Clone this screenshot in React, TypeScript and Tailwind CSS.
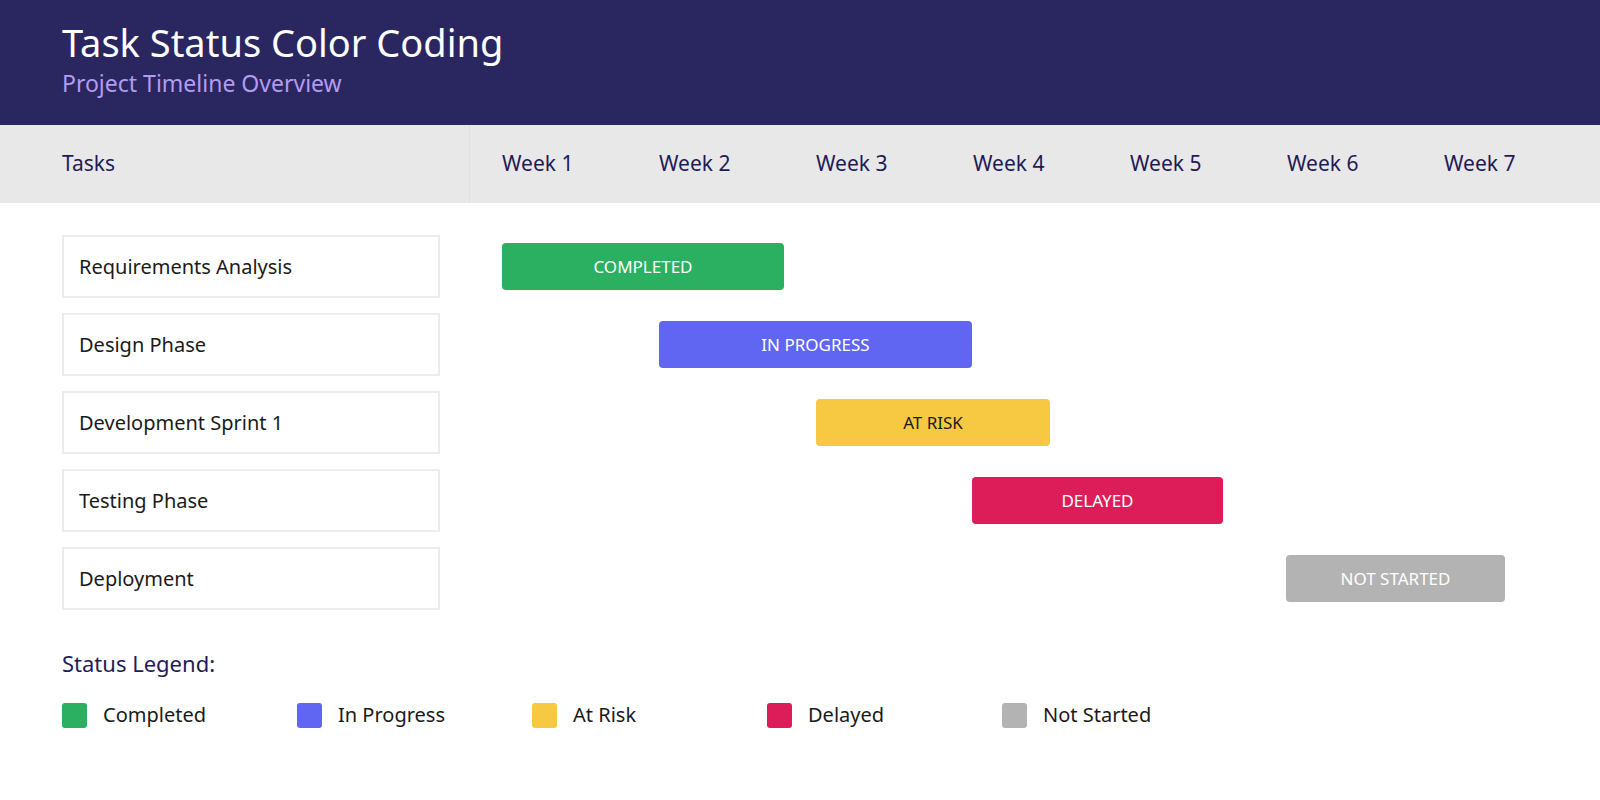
import React from 'react';

const WEEKS = ['Week 1', 'Week 2', 'Week 3', 'Week 4', 'Week 5', 'Week 6', 'Week 7'];

// offsets are relative to the timeline start (x=470)
const TASKS = [
  { name: 'Requirements Analysis', label: 'COMPLETED', left: 32, width: 282, bar: 'bg-[#2bb062]', text: 'text-white' },
  { name: 'Design Phase', label: 'IN PROGRESS', left: 189, width: 313, bar: 'bg-[#6065f2]', text: 'text-white' },
  { name: 'Development Sprint 1', label: 'AT RISK', left: 346, width: 234, bar: 'bg-[#f7c842]', text: 'text-[#1a1a1a]' },
  { name: 'Testing Phase', label: 'DELAYED', left: 502, width: 251, bar: 'bg-[#dd1d5a]', text: 'text-white' },
  { name: 'Deployment', label: 'NOT STARTED', left: 816, width: 219, bar: 'bg-[#b3b3b3]', text: 'text-white' },
];

const LEGEND = [
  { label: 'Completed', color: 'bg-[#2bb062]' },
  { label: 'In Progress', color: 'bg-[#6065f2]' },
  { label: 'At Risk', color: 'bg-[#f7c842]' },
  { label: 'Delayed', color: 'bg-[#dd1d5a]' },
  { label: 'Not Started', color: 'bg-[#b3b3b3]' },
];

const App: React.FC = () => {
  return (
    <div className="w-[1600px] h-[800px] bg-white font-['DejaVu_Sans',sans-serif]">
      <header className="h-[125px] bg-[#2a2660] pl-[62px] pt-[18px]">
        <h1 className="text-[38px] leading-[48px] text-white">Task Status Color Coding</h1>
        <p className="text-[23px] leading-[34px] text-[#b39cf0]">Project Timeline Overview</p>
      </header>

      <div className="flex h-[78px] bg-[#e8e8e8] text-[#1f1b57] text-[21px] items-center">
        <div className="w-[470px] h-full flex items-center pl-[62px] border-r border-[#e0e0e0]">Tasks</div>
        {WEEKS.map(w => (
          <div key={w} className="w-[157px] pl-[32px]">{w}</div>
        ))}
      </div>

      <div className="pt-[32px] flex flex-col gap-[15px]">
        {TASKS.map(t => (
          <div key={t.name} className="flex h-[63px]">
            <div className="ml-[62px] w-[378px] h-full border-2 border-[#ececec] flex items-center pl-[15px] text-[20px] text-[#1a1a1a]">
              {t.name}
            </div>
            <div className="ml-[30px] flex-1 flex items-center">
              <div
                className={`h-[47px] rounded-[4px] flex items-center justify-center text-[17px] ${t.bar} ${t.text}`}
                style={{ marginLeft: t.left, width: t.width }}
              >
                {t.label}
              </div>
            </div>
          </div>
        ))}
      </div>

      <div className="pl-[62px] pt-[38px]">
        <h2 className="text-[22px] leading-[30px] text-[#1f1b57]">Status Legend:</h2>
        <div className="flex mt-[22px]">
          {LEGEND.map(l => (
            <div key={l.label} className="w-[235px] flex items-center gap-[16px] text-[20px] text-[#1a1a1a]">
              <span className={`w-[25px] h-[25px] rounded-[3px] ${l.color}`} />
              {l.label}
            </div>
          ))}
        </div>
      </div>
    </div>
  );
};

export default App;
